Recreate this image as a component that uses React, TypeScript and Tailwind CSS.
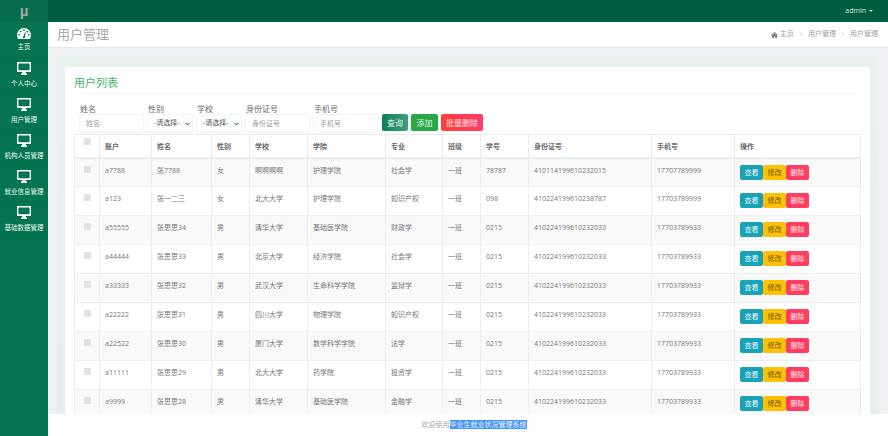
const FONT = "font-['Open_Sans','Noto_Sans_CJK_SC',sans-serif]";

function Monitor() {
  return (
    <svg width="14" height="13" viewBox="0 0 14 13" className="block">
      <path fill="#fff" fillRule="evenodd" d="M1 0h12a1 1 0 0 1 1 1v8a1 1 0 0 1-1 1H8.6l.4 1.6h1V13H4v-1.400h1L5.400 10H1a1 1 0 0 1-1-1V1a1 1 0 0 1 1-1zm.4 1.400v6.900h11.200V1.400z" />
    </svg>
  );
}

function Gauge() {
  return (
    <svg width="14" height="11" viewBox="0 0 14 11" className="block">
      <path fill="#fff" d="M7 0a7 7 0 0 1 7 7c0 1.500-.4 2.900-1.200 4H1.200A7 7 0 0 1 0 7a7 7 0 0 1 7-7z" />
      <g fill="#03734f">
        <circle cx="7" cy="2.200" r=".9" />
        <circle cx="3.600" cy="3.500" r=".9" />
        <circle cx="10.400" cy="3.500" r=".9" />
        <circle cx="2.200" cy="6.800" r=".9" />
        <circle cx="11.800" cy="6.800" r=".9" />
        <path d="M6 9.300 8.100 3.900 8.700 4.100 8 9.300a1 1 0 0 1-2 0z" />
      </g>
    </svg>
  );
}

const nav = [
  { label: "主页", icon: <Gauge /> },
  { label: "个人中心", icon: <Monitor /> },
  { label: "用户管理", icon: <Monitor /> },
  { label: "机构人员管理", icon: <Monitor /> },
  { label: "就业信息管理", icon: <Monitor /> },
  { label: "基础数据管理", icon: <Monitor /> },
];

const rows = [
  ["a7788", "张7788", "女", "啊啊啊啊", "护理学院", "社会学", "一班", "78787", "410114199610232015", "17707789999"],
  ["a123", "张一二三", "女", "北大大学", "护理学院", "知识产权", "一班", "098", "410224199610238787", "17703789999"],
  ["a55555", "张思思34", "男", "清华大学", "基础医学院", "财政学", "一班", "0215", "410224199610232033", "17703789933"],
  ["a44444", "张思思33", "男", "北京大学", "经济学院", "社会学", "一班", "0215", "410224199610232033", "17703789933"],
  ["a33333", "张思思32", "男", "武汉大学", "生命科学学院", "监狱学", "一班", "0215", "410224199610232033", "17703789933"],
  ["a22222", "张思思31", "男", "四川大学", "物理学院", "知识产权", "一班", "0215", "410224199610232033", "17703789933"],
  ["a22522", "张思思30", "男", "厦门大学", "数学科学学院", "法学", "一班", "0215", "410224199610232033", "17703789933"],
  ["a11111", "张思思29", "男", "北大大学", "药学院", "投资学", "一班", "0215", "410224199610232033", "17703789933"],
  ["a9999", "张思思28", "男", "清华大学", "基础医学院", "金融学", "一班", "0215", "410224199610232033", "17703789933"],
];

const headers = ["账户", "姓名", "性别", "学校", "学院", "专业", "班级", "学号", "身份证号", "手机号", "操作"];
const widths = [25, 52, 60, 38, 58, 78, 57, 38, 48, 123, 83, 126];

function Field({ label, placeholder, w }: { label: string; placeholder: string; w: string }) {
  return (
    <div className="flex flex-col">
      <label className="h-[11px] pl-[1px] text-[8px] leading-[11px] text-[#676a6c]">{label}</label>
      <input
        readOnly
        placeholder={placeholder}
        className={`${w} h-[19px] rounded-[2px] border border-[#f0f4f4] bg-white pl-[6px] text-[7px] outline-none placeholder:text-[#9a9ea1]`}
      />
    </div>
  );
}

function SelectField({ label }: { label: string }) {
  return (
    <div className="flex flex-col">
      <label className="h-[11px] pl-[1px] text-[8px] leading-[11px] text-[#676a6c]">{label}</label>
      <div className="relative flex h-[19px] w-[46px] items-center rounded-[2px] border border-[#f0f4f4] bg-white pl-[6px] text-[7px] text-[#555]">
        -请选择-
        <svg width="5" height="4" viewBox="0 0 5 4" className="absolute right-[2px] top-[7px]">
          <path d="M.5.800 2.500 3 4.500.800" fill="none" stroke="#444" strokeWidth="1" />
        </svg>
      </div>
    </div>
  );
}

function Btn({ className, children }: { className: string; children: string }) {
  return (
    <span className={`flex h-[15px] w-[23px] items-center justify-center rounded-[2px] text-[7px] leading-none ${className}`}>
      {children}
    </span>
  );
}

export default function App() {
  return (
    <div className={`${FONT} flex h-[436px] w-[888px] overflow-hidden bg-white text-[7px] text-[#676a6c]`}>
      <aside className="flex w-[48px] shrink-0 flex-col bg-[#037351]">
        <div className="flex h-[22px] items-center justify-center bg-[#076b4d] font-['Liberation_Sans'] text-[15px] font-bold text-[#a3aaa6]">
          µ
        </div>
        {nav.map((n, i) => (
          <div key={n.label} className={`flex h-[36px] flex-col items-center border-b border-[#056f4f] ${i === 0 ? "pt-[6px]" : "pt-[4px]"}`}>
            <div className={i === 0 ? "h-[11px]" : "h-[13px]"}>{n.icon}</div>
            <div className={`${i === 0 ? "mt-[3px]" : "mt-[4px]"} whitespace-nowrap text-[6.5px] leading-[9px] text-[#e9f5f0]`}>{n.label}</div>
          </div>
        ))}
      </aside>

      <div className="flex min-w-0 flex-1 flex-col">
        <header className="flex h-[22px] shrink-0 items-center justify-end bg-[#005c40] pr-[15px] text-[7px] text-[#d8e6e0]">
          admin
          <span className="ml-[3px] h-0 w-0 border-x-[2px] border-t-[2px] border-x-transparent border-t-[#d8e6e0]" />
        </header>

        <div className="flex h-[26px] shrink-0 items-center justify-between border-b border-[#e7e8ee] bg-white pl-[9px] pr-[10px]">
          <span className="text-[13px] text-[#a7a9ab]">用户管理</span>
          <div className="flex items-center text-[7px] text-[#a0a2a4]">
            <svg width="7" height="6" viewBox="0 0 7 6" className="mr-[2px]">
              <path fill="#777" d="M3.500 0 7 3 6.500 3.400 3.500 1 .5 3.400 0 3zM1 3.500 3.500 1.500 6 3.500V6H4.200V4.400H2.800V6H1z" />
            </svg>
            <span>主页</span>
            <span className="mx-[6px] text-[#a0a2a4]">›</span>
            <span>用户管理</span>
            <span className="mx-[6px] text-[#a0a2a4]">›</span>
            <span>用户管理</span>
          </div>
        </div>

        <main className="min-h-0 flex-1 overflow-hidden bg-[#eff0f4] pl-[9px] pr-[11px] pt-[9px]">
          <div className="h-[400px] bg-gradient-to-b from-[#e8f3ed] to-[#e4eeeb] pl-[8px] pr-[7px] pt-[10px]">
            <div className="h-[390px] bg-white pl-[9px] pr-[10px] pt-[9px]">
              <h2 className="h-[17px] text-[11px] leading-[14px] text-[#47b36c]">用户列表</h2>
              <div className="flex h-[41px] items-start gap-[3px] border-t border-[#f4f5f5] pl-[5px] pt-[9px]">
                <Field label="姓名" placeholder="姓名" w="w-[65px]" />
                <div className="ml-[0px]"><SelectField label="性别" /></div>
                <div className="ml-[0px]"><SelectField label="学校" /></div>
                <Field label="身份证号" placeholder="身份证号" w="w-[65px]" />
                <Field label="手机号" placeholder="手机号" w="w-[66px]" />
                <div className="ml-0 mt-[11px] flex gap-[3px]">
                  <span className="flex h-[17px] w-[26px] items-center justify-center rounded-[2px] bg-gradient-to-r from-[#06815a] to-[#3d9e7c] text-[8px] text-[#e6f3ee]">查询</span>
                  <span className="flex h-[17px] w-[27px] items-center justify-center rounded-[2px] bg-[#28a745] text-[8px] text-[#e6f3ee]">添加</span>
                  <span className="flex h-[17px] w-[42px] items-center justify-center rounded-[2px] bg-gradient-to-r from-[#ff3f34] to-[#ff3a68] text-[8px] text-[#ffeaea]">批量删除</span>
                </div>
              </div>

              <table className="w-[786px] table-fixed border-collapse">
                <colgroup>
                  {widths.map((w, i) => (
                    <col key={i} style={{ width: w }} />
                  ))}
                </colgroup>
                <thead>
                  <tr className="h-[23px]">
                    <th className="border border-b-2 border-[#eaebee] align-top pt-[3px]">
                      <span className="mx-auto block h-[7px] w-[7px] bg-[#dfe2e7]" />
                    </th>
                    {headers.map((h) => (
                      <th key={h} className="border border-b-2 border-[#eaebee] pl-[5px] pt-[2px] text-left text-[7px] font-semibold text-[#676a6c]">
                        {h}
                      </th>
                    ))}
                  </tr>
                </thead>
                <tbody>
                  {rows.map((r, i) => (
                    <tr key={r[0]} className={`h-[29px] ${i % 2 === 0 ? "bg-[#f9f9f9]" : "bg-white"}`}>
                      <td className="border border-[#eceef0] align-top pt-[7px]">
                        <span className="mx-auto block h-[7px] w-[7px] bg-[#dfe2e7]" />
                      </td>
                      {r.map((c, j) => (
                        <td key={j} className="overflow-hidden whitespace-nowrap border border-[#eceef0] pl-[5px] pt-[7px] align-top text-[7px] leading-[10px] text-[#747679]">
                          {c}
                        </td>
                      ))}
                      <td className="border border-[#eceef0] pl-[5px] pt-[6px] align-top">
                        <div className="flex">
                          <Btn className="bg-[#17a2b8] text-[#e8f7fa]">查看</Btn>
                          <Btn className="bg-[#ffc107] text-[#6b5304]">修改</Btn>
                          <Btn className="bg-[#ff3d5f] text-[#ffe9ed]">删除</Btn>
                        </div>
                      </td>
                    </tr>
                  ))}
                </tbody>
              </table>
            </div>
          </div>
        </main>

        <footer className="relative z-10 flex h-[22px] shrink-0 items-center justify-center bg-white pr-[0px] text-[7px] text-[#a9abad]">
          <span className="ml-[12px]">欢迎使用<span className="bg-[#3f93f5] text-[#eef6ff]">毕业生就业状况管理系统</span></span>
        </footer>
      </div>
    </div>
  );
}
